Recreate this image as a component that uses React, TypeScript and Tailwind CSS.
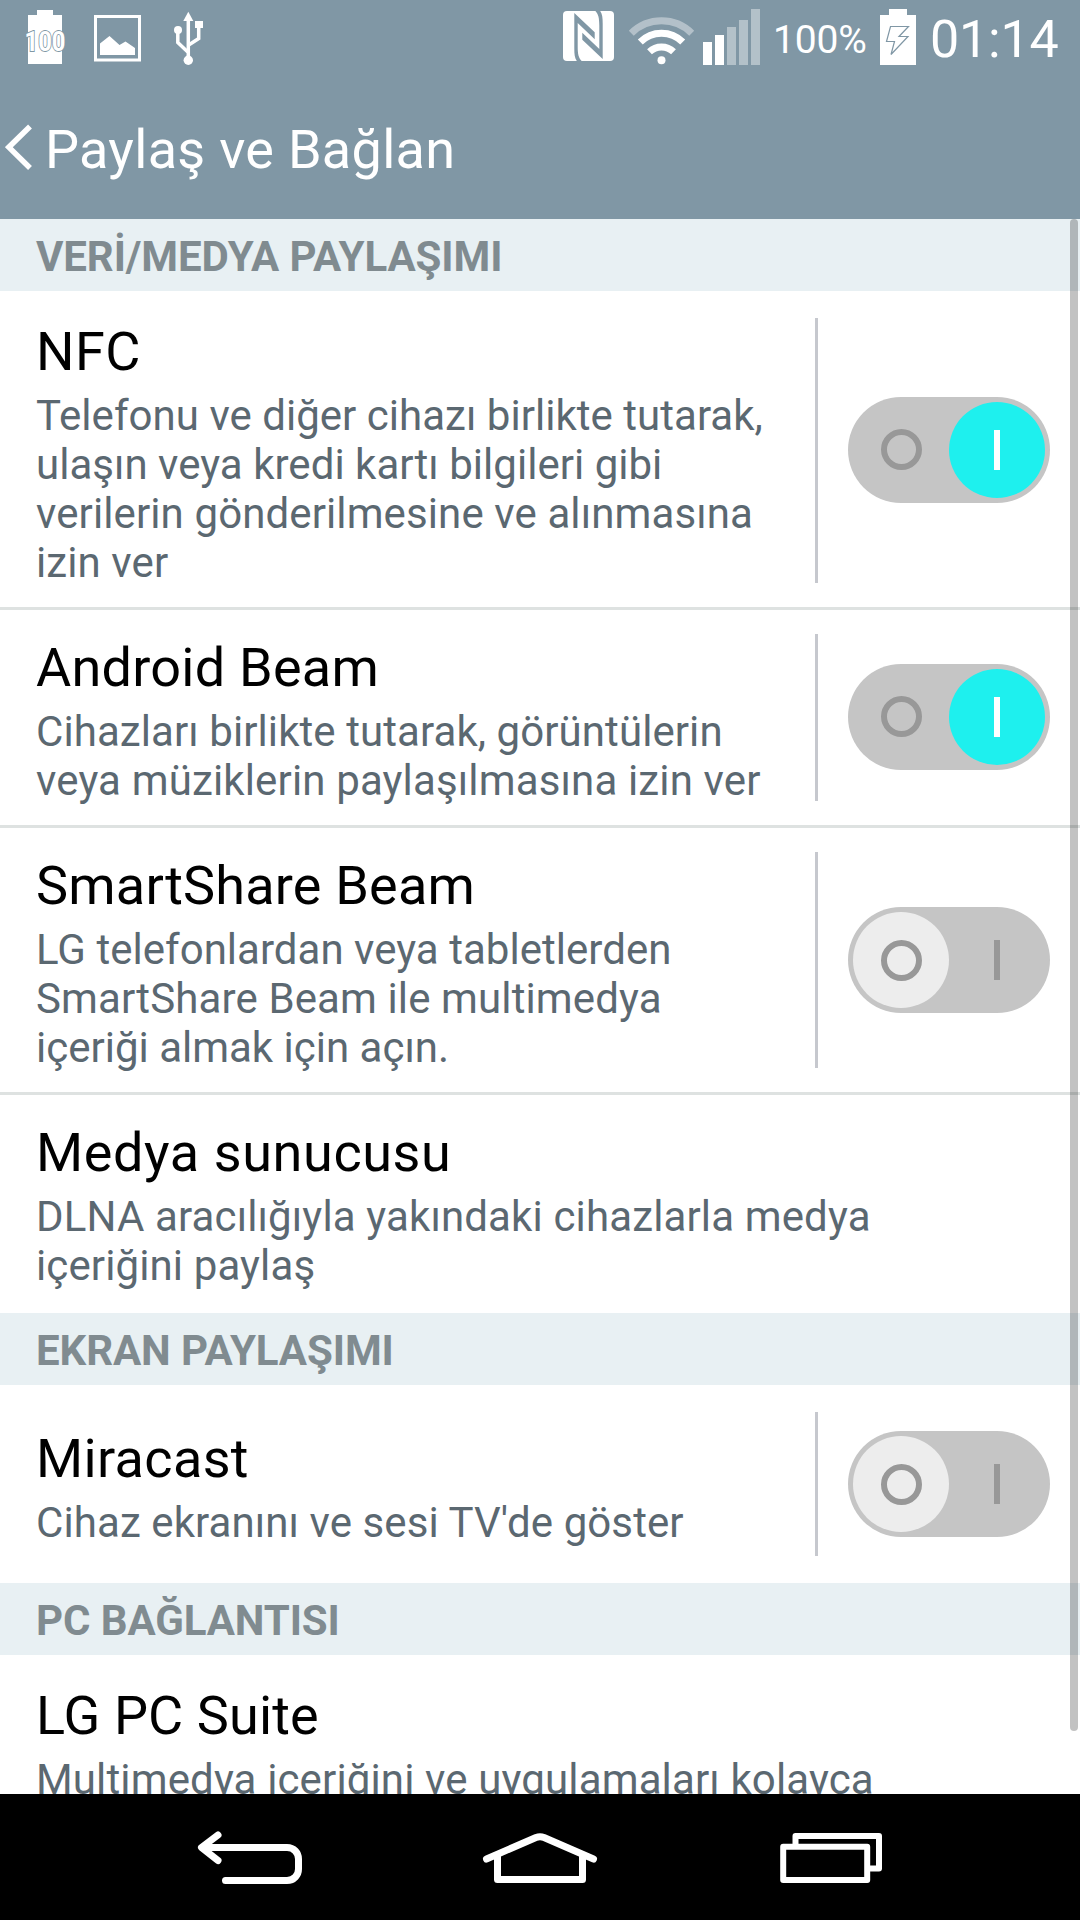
import React from "react";

type Line = [text: string, tracking: string];

type Item = {
  title: Line;
  lines: Line[];
  on?: boolean;
};

type Section = {
  name: string;
  items: Item[];
};

const sections: Section[] = [
  {
    name: "VERİ/MEDYA PAYLAŞIMI",
    items: [
      {
        title: ["NFC", "tracking-[0.5px]"],
        lines: [
          ["Telefonu ve diğer cihazı birlikte tutarak,", "tracking-[0.03px]"],
          ["ulaşın veya kredi kartı bilgileri gibi", "tracking-[0.03px]"],
          ["verilerin gönderilmesine ve alınmasına", "tracking-[0.11px]"],
          ["izin ver", "tracking-[0.1px]"],
        ],
        on: true,
      },
      {
        title: ["Android Beam", "tracking-[0.25px]"],
        lines: [
          ["Cihazları birlikte tutarak, görüntülerin", "tracking-[0.08px]"],
          ["veya müziklerin paylaşılmasına izin ver", "tracking-[0.15px]"],
        ],
        on: true,
      },
      {
        title: ["SmartShare Beam", "tracking-[0.2px]"],
        lines: [
          ["LG telefonlardan veya tabletlerden", "tracking-[0.03px]"],
          ["SmartShare Beam ile multimedya", "tracking-[0.12px]"],
          ["içeriği almak için açın.", "tracking-normal"],
        ],
        on: false,
      },
      {
        title: ["Medya sunucusu", "tracking-[0.6px]"],
        lines: [
          ["DLNA aracılığıyla yakındaki cihazlarla medya", "tracking-[0.14px]"],
          ["içeriğini paylaş", "tracking-[0.12px]"],
        ],
      },
    ],
  },
  {
    name: "EKRAN PAYLAŞIMI",
    items: [
      {
        title: ["Miracast", "tracking-[0.35px]"],
        lines: [["Cihaz ekranını ve sesi TV'de göster", "tracking-[0.09px]"]],
        on: false,
      },
    ],
  },
  {
    name: "PC BAĞLANTISI",
    items: [
      {
        title: ["LG PC Suite", "tracking-[0.12px]"],
        lines: [["Multimedya içeriğini ve uygulamaları kolayca", "tracking-[0.14px]"]],
      },
    ],
  },
];

const StatusBar = () => (
  <div className="flex h-[75px] items-start text-white">
    <svg className="ml-[22px] mt-[9px] shrink-0" width="48" height="56" viewBox="22 9 48 56">
      <path d="M28 15h9v-5h16v5h9v49H28z" fill="#fff" />
      <text
        x="45"
        y="51"
        textAnchor="middle"
        fontFamily="Roboto, sans-serif"
        fontSize="27.500"
        fontWeight="700"
        textLength="41"
        lengthAdjust="spacingAndGlyphs"
        fill="#fff"
        stroke="#8097a5"
        strokeWidth="1.800"
        paintOrder="stroke"
      >
        100
      </text>
    </svg>
    <svg className="ml-[24px] mt-[15px] shrink-0" width="47" height="47" viewBox="94 15 47 47">
      <rect x="95.5" y="16.5" width="44" height="43.5" fill="none" stroke="#fff" strokeWidth="3" />
      <path d="M100 55V43.500l9.500-7.500 10 9 6-3.500 9.500 6.500V55z" fill="#fff" />
    </svg>
    <svg className="ml-[32px] mt-[11px] shrink-0" width="32" height="55" viewBox="173 11 32 55">
      <g fill="none" stroke="#fff" strokeWidth="3.500">
        <path d="M188.300 20v38" />
        <path d="M177.800 31v11.500l10 9.500" />
        <path d="M198.700 26v12.500l-10 6.500" />
      </g>
      <path d="M188.300 11.700l5 9.300h-10z" fill="#fff" />
      <rect x="195" y="21" width="8" height="7" fill="#fff" />
      <circle cx="178" cy="30" r="4" fill="#fff" />
      <circle cx="188.300" cy="60.300" r="4.700" fill="#fff" />
    </svg>

    <svg className="ml-[358px] mt-[11px] shrink-0" width="51" height="50" viewBox="563 11 51 50">
      <rect x="563" y="11" width="51" height="50" rx="4" fill="#fff" />
      <g fill="#8097a5">
        <path d="M574.300 13L594.700 32.300V39.300L577.700 23V46.500c0 8 1 12 4.500 15h-5c-2.500-3-2.900-7-2.900-13z" />
        <path d="M602.700 59L582.300 39.700V32.700L599.300 49V25.500c0-8-1-12-4.500-15h5c2.500 3 2.900 7 2.900 13z" />
      </g>
    </svg>
    <svg className="ml-[14px] mt-[14px] shrink-0" width="68" height="52" viewBox="628 14 68 52">
      <g fill="none" stroke="#fff" strokeWidth="7">
        <path d="M631.300 33.200a43 43 0 0 1 60.400 0" opacity="0.400" />
        <path d="M640.300 42a30 30 0 0 1 42.400 0" />
        <path d="M649.500 51.800a17.500 17.500 0 0 1 24 0" />
      </g>
      <circle cx="661.500" cy="60.300" r="4" fill="#fff" />
    </svg>
    <div className="mt-[9px] ml-[7px] flex h-14 shrink-0 items-end gap-[3px]">
      <div className="h-[23px] w-[9px] bg-white" />
      <div className="h-[30px] w-[9px] bg-white" />
      <div className="h-[38px] w-[9px] bg-[#b3c1c9]" />
      <div className="h-[45px] w-[9px] bg-[#b3c1c9]" />
      <div className="h-14 w-[9px] bg-[#b3c1c9]" />
    </div>
    <span className="mt-[17px] ml-[13px] w-[107px] shrink-0 text-[39px] leading-[46px] tracking-[-0.2px] whitespace-nowrap">
      100%
    </span>
    <svg className="mt-[9px] shrink-0" width="36" height="56" viewBox="880 9 36 56">
      <path d="M880 15h9V9h18v6h9v50h-36z" fill="#fff" />
      <path
        d="M890.500 26.500h18l-9.500 10h9l-17 18 3.500-13h-8z"
        fill="none"
        stroke="#8097a5"
        strokeWidth="1.200"
      />
    </svg>
    <span className="mt-[9px] ml-[14px] shrink-0 text-[52px] leading-[61px] tracking-[-0.2px] whitespace-nowrap">
      01:14
    </span>
  </div>
);

const TitleBar = () => (
  <div className="flex h-36 items-start text-white">
    <svg className="mt-[49px] ml-[5px] shrink-0" width="28" height="46" viewBox="5 124 28 46">
      <path d="M30 126.500L8.800 147.200L30 168" fill="none" stroke="#fff" strokeWidth="5.500" />
    </svg>
    <h1 className="mt-[43px] ml-[12px] text-[54px] leading-[63px] tracking-[0.3px] whitespace-nowrap">
      Paylaş ve Bağlan
    </h1>
  </div>
);

const Switch = ({ on }: { on: boolean }) => (
  <button
    role="switch"
    aria-checked={on}
    className="flex h-[106px] w-[202px] shrink-0 items-center rounded-full bg-[#c5c5c5] px-[5px]"
  >
    <span
      className={`flex size-24 items-center justify-center rounded-full ${on ? "" : "bg-[#ededed]"}`}
    >
      <span
        className={`size-[41px] rounded-full border-[6px] border-[#989898] ${on ? "mb-px" : "mt-px"}`}
      />
    </span>
    <span
      className={`flex size-24 items-center justify-center rounded-full ${on ? "bg-[#1ef0ee]" : ""}`}
    >
      <span className={`h-10 w-[6px] ${on ? "bg-white" : "bg-[#989898]"}`} />
    </span>
  </button>
);

const Row = ({ item }: { item: Item }) => {
  const [title, titleTracking] = item.title;
  const hasSwitch = item.on !== undefined;

  return (
    <div className={`flex shrink-0 ${hasSwitch ? "min-h-48" : ""}`}>
      <div className="flex grow flex-col justify-center pt-[26px] pb-5 pl-9">
        <h3 className={`text-[54px] leading-[63px] whitespace-nowrap text-black ${titleTracking}`}>{title}</h3>
        <p className="mt-2 text-[42px] leading-[49px] text-[#5b6871]">
          {item.lines.map(([text, tracking]) => (
            <span key={text} className={`block whitespace-nowrap ${tracking}`}>
              {text}
            </span>
          ))}
        </p>
      </div>
      {item.on !== undefined && (
        <div className="flex w-[265px] shrink-0 items-center">
          <div className="my-6 w-[3px] self-stretch bg-[#c6c8ce]" />
          <div className="mb-px ml-[30px]">
            <Switch on={item.on} />
          </div>
        </div>
      )}
    </div>
  );
};

const NavBar = () => (
  <div className="flex h-[126px] shrink-0 items-start bg-black pl-[196px]">
    <svg className="mt-[35px] shrink-0" width="108" height="58" viewBox="196 1829 108 58">
      <g fill="none" stroke="#fff" strokeWidth="7" strokeLinecap="round" strokeLinejoin="round">
        <path d="M218 1835L201.500 1847.500L218 1860.500" />
        <path d="M203 1847.500h84c7 0 11.500 5.500 11.500 11.500v10c0 6-4.500 11.500-11.500 11.500h-61.500" />
      </g>
    </svg>
    <svg className="mt-[35px] ml-[177px] shrink-0" width="118" height="58" viewBox="481 1829 118 58">
      <g fill="none" stroke="#fff" strokeWidth="7" strokeLinecap="round" strokeLinejoin="round">
        <path d="M486.500 1859L536 1837.500q4-1.500 8 0L593.500 1859" />
        <path d="M497.500 1856v23.500h85V1856" />
      </g>
    </svg>
    <svg className="mt-[35px] ml-[179px] shrink-0" width="106" height="58" viewBox="778 1829 106 58">
      <g fill="none" stroke="#fff" strokeWidth="6" strokeLinejoin="round">
        <rect x="795.500" y="1836" width="83.500" height="32.500" />
        <rect x="783.200" y="1846.700" width="84" height="33.300" fill="#000" />
      </g>
    </svg>
  </div>
);

const App = () => {
  return (
    <div className="flex h-[1920px] w-[1080px] flex-col overflow-hidden bg-white font-[Roboto,sans-serif]">
      <header className="shrink-0 bg-[#8097a5]">
        <StatusBar />
        <TitleBar />
      </header>

      <main className="relative flex min-h-0 grow flex-col overflow-hidden">
        {sections.map((section) => (
          <section key={section.name} className="shrink-0">
            <h2 className="h-[72px] bg-[#e8f0f3] pt-[13px] pl-9 text-[42px] leading-[49px] font-bold tracking-[-0.1px] whitespace-nowrap text-[#808b90]">
              {section.name}
            </h2>
            <div className="divide-y-[3px] divide-[#dee2e1] py-[3px]">
              {section.items.map((item) => (
                <Row key={item.title[0]} item={item} />
              ))}
            </div>
          </section>
        ))}

        {/* scroll indicator */}
        <div className="absolute top-0 right-[2px] h-[1512px] w-2 rounded-full bg-black/24" />
      </main>

      <NavBar />
    </div>
  );
};

export default App;
